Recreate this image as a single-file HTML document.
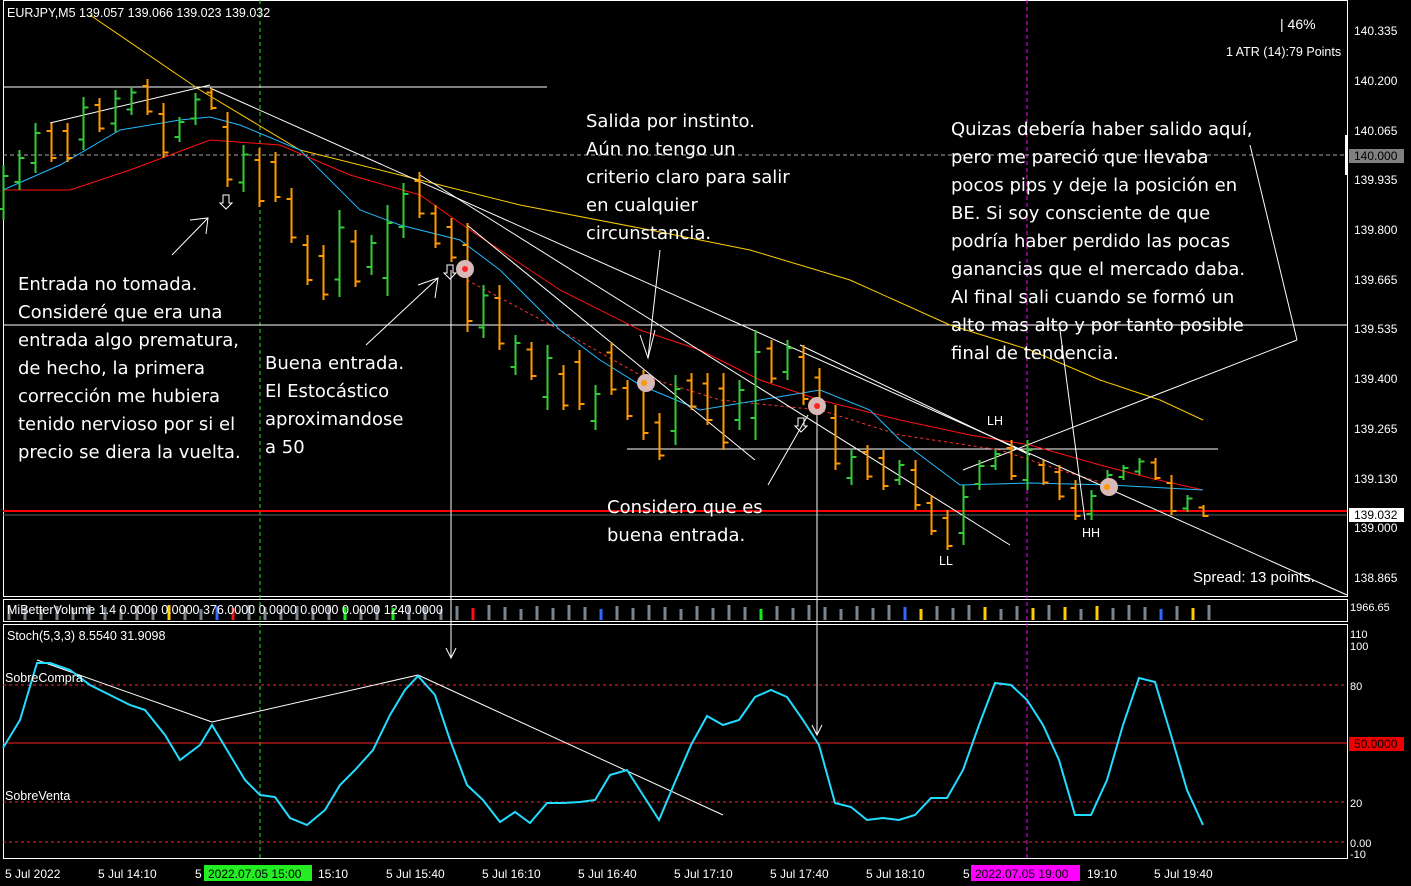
<!DOCTYPE html>
<html><head><meta charset="utf-8">
<style>
html,body{margin:0;padding:0;background:#000;width:1411px;height:886px;overflow:hidden}
svg{display:block}
line{shape-rendering:crispEdges}
.ax{font-family:"Liberation Sans",Arial,sans-serif;font-size:12px;fill:#fff}
.note{font-family:"DejaVu Sans","Liberation Sans",sans-serif;font-size:18px;fill:#fff}
.sm{font-family:"Liberation Sans",Arial,sans-serif;font-size:12.5px;fill:#fff}
</style></head><body>
<svg id="s" width="1411" height="886" xmlns="http://www.w3.org/2000/svg">
<rect width="1411" height="886" fill="#000"/>
<rect x="3.5" y="0.5" width="1344" height="596" fill="none" stroke="#fff"/>
<rect x="3.5" y="599.5" width="1344" height="22" fill="none" stroke="#fff"/>
<rect x="3.5" y="624.5" width="1344" height="234" fill="none" stroke="#fff"/>
<line x1="260" y1="0" x2="260" y2="858" stroke="#3d3" stroke-dasharray="4,3"/>
<line x1="1027" y1="0" x2="1027" y2="858" stroke="#f0f" stroke-dasharray="4,3"/>
<line x1="3" y1="155" x2="1347" y2="155" stroke="#aaa" stroke-dasharray="4,3"/>
<line x1="3" y1="685" x2="1347" y2="685" stroke="#f23" stroke-dasharray="3,3"/>
<line x1="3" y1="802" x2="1347" y2="802" stroke="#f23" stroke-dasharray="3,3"/>
<line x1="3" y1="743" x2="1347" y2="743" stroke="#f22"/>
<line x1="3" y1="842" x2="1347" y2="842" stroke="#f23" stroke-dasharray="3,3"/>
<line x1="3" y1="87" x2="547" y2="87" stroke="#fff"/>
<line x1="3" y1="325" x2="1347" y2="325" stroke="#fff"/>
<line x1="627" y1="449" x2="1218" y2="449" stroke="#fff"/>
<line x1="3" y1="515" x2="1347" y2="515" stroke="#566"/>
<line x1="3" y1="511" x2="1347" y2="511" stroke="#f00" stroke-width="2"/>
<polyline fill="none" stroke="#fc0" points="90,15 200,90 300,150 420,180 520,205 650,230 750,250 850,280 950,325 1030,350 1100,380 1160,400 1203,420"/>
<polyline fill="none" stroke="#f11" points="3,190 70,190 130,170 210,140 280,145 350,175 420,195 470,230 560,290 640,330 700,350 760,380 820,400 900,420 970,435 1030,445 1100,465 1150,478 1203,490"/>
<polyline fill="none" stroke="#f33" stroke-dasharray="3,3" points="467,280 560,330 640,375 720,400 820,410 900,435 1000,450 1060,470 1110,485"/>
<polyline fill="none" stroke="#2bf" points="3,190 60,165 120,130 180,120 210,117 240,125 300,150 360,210 400,225 460,240 500,270 560,330 600,360 640,385 700,410 760,400 820,390 870,410 900,440 940,470 960,485 1030,483 1110,485 1203,490"/>
<g stroke="#fff" fill="none">
<line x1="50" y1="123" x2="210" y2="85" style="shape-rendering:auto"/>
<line x1="210" y1="88" x2="1347" y2="595" style="shape-rendering:auto"/>
<line x1="420" y1="175" x2="1010" y2="545" style="shape-rendering:auto"/>
<line x1="467" y1="225" x2="755" y2="460" style="shape-rendering:auto"/>
<line x1="800" y1="345" x2="1030" y2="455" style="shape-rendering:auto"/>
<line x1="963" y1="470" x2="1297" y2="340" style="shape-rendering:auto"/>
<line x1="1297" y1="340" x2="1250" y2="145" style="shape-rendering:auto"/>
<line x1="1060" y1="330" x2="1085" y2="520" style="shape-rendering:auto"/>
<line x1="451" y1="270" x2="451" y2="658"/>
<polyline points="446,648 451,658 456,648"/>
<line x1="817" y1="410" x2="817" y2="735"/>
<polyline points="812,725 817,735 822,725"/>
<line x1="172" y1="255" x2="208" y2="218" style="shape-rendering:auto"/><polyline points="190,220 208,218 206,234"/>
<line x1="366" y1="345" x2="438" y2="278" style="shape-rendering:auto"/><polyline points="418,285 438,278 435,298"/>
<line x1="648" y1="358" x2="660" y2="250" style="shape-rendering:auto"/><polyline points="640,335 648,358 655,330"/>
<line x1="768" y1="485" x2="808" y2="415" style="shape-rendering:auto"/>
<line x1="37" y1="660" x2="212" y2="722" style="shape-rendering:auto"/>
<line x1="212" y1="722" x2="418" y2="675" style="shape-rendering:auto"/>
<line x1="418" y1="675" x2="723" y2="815" style="shape-rendering:auto"/>
</g>
<g id="bars"></g>
<g id="vol"></g>
<g stroke="#fff" fill="none">
<path d="M223,195 h6 v8 h3 l-6,6 l-6,-6 h3 z"/>
<path d="M447,265 h6 v8 h3 l-6,6 l-6,-6 h3 z"/>
<path d="M798,418 h6 v8 h3 l-6,6 l-6,-6 h3 z"/>
</g>
<g>
<circle cx="465" cy="269" r="9" fill="#d9b8b8"/><circle cx="465" cy="269" r="3" fill="#f22"/>
<circle cx="646" cy="383" r="9" fill="#d9b8b8"/><circle cx="644" cy="383" r="3" fill="#f90"/>
<circle cx="817" cy="406" r="9" fill="#d9b8b8"/><circle cx="817" cy="406" r="3" fill="#f22"/>
<circle cx="1109" cy="487" r="9" fill="#d9b8b8"/><circle cx="1107" cy="487" r="3" fill="#f90"/>
</g>
<polyline fill="none" stroke="#2df" stroke-width="2" points="3,748 20,720 37,663 50,663 70,670 90,685 110,695 130,705 145,710 165,735 180,760 200,745 212,725 230,755 245,780 260,795 275,797 290,818 307,825 325,810 340,785 355,770 373,750 390,715 405,690 418,676 435,695 450,740 467,785 483,800 500,822 515,812 530,823 547,803 563,803 580,802 595,800 610,775 627,770 643,795 659,820 675,782 691,745 707,716 723,725 739,720 755,697 771,690 787,697 803,720 819,745 835,803 851,807 867,820 883,818 899,820 915,815 931,798 947,798 963,770 979,725 995,683 1011,685 1027,700 1043,725 1059,760 1075,815 1091,815 1107,780 1123,725 1139,678 1155,682 1171,735 1187,790 1203,825"/>
<text class="sm" x="7" y="17">EURJPY,M5  139.057 139.066 139.023 139.032</text>
<text class="sm" x="1280" y="29" font-size="14" style="font-size:14px">|  46%</text>
<text class="sm" x="1226" y="56">1 ATR (14):79 Points</text>
<text class="sm" x="7" y="614">MiBetterVolume 1.4 0.0000 0.0000 376.0000 0.0000 0.0000 0.0000 1240.0000</text>
<text class="sm" x="7" y="640">Stoch(5,3,3) 8.5540 31.9098</text>
<text class="sm" x="5" y="682">SobreCompra</text>
<text class="sm" x="5" y="800">SobreVenta</text>
<text class="sm" x="987" y="425">LH</text>
<text class="sm" x="939" y="565">LL</text>
<text class="sm" x="1082" y="537">HH</text>
<text class="sm" x="1193" y="582" style="font-size:15px">Spread: 13 points.</text>
<g class="note">
<text x="18" y="290">Entrada no tomada.</text>
<text x="18" y="318">Consideré que era una</text>
<text x="18" y="346">entrada algo prematura,</text>
<text x="18" y="374">de hecho, la primera</text>
<text x="18" y="402">corrección me hubiera</text>
<text x="18" y="430">tenido nervioso por si el</text>
<text x="18" y="458">precio se diera la vuelta.</text>
<text x="265" y="369">Buena entrada.</text>
<text x="265" y="397">El Estocástico</text>
<text x="265" y="425">aproximandose</text>
<text x="265" y="453">a 50</text>
<text x="586" y="127">Salida por instinto.</text>
<text x="586" y="155">Aún no tengo un</text>
<text x="586" y="183">criterio claro para salir</text>
<text x="586" y="211">en cualquier</text>
<text x="586" y="239">circunstancia.</text>
<text x="607" y="513">Considero que es</text>
<text x="607" y="541">buena entrada.</text>
<text x="951" y="135">Quizas debería haber salido aquí,</text>
<text x="951" y="163">pero me pareció que llevaba</text>
<text x="951" y="191">pocos pips y deje la posición en</text>
<text x="951" y="219">BE. Si soy consciente de que</text>
<text x="951" y="247">podría haber perdido las pocas</text>
<text x="951" y="275">ganancias que el mercado daba.</text>
<text x="951" y="303">Al final sali cuando se formó un</text>
<text x="951" y="331">alto mas alto y por tanto posible</text>
<text x="951" y="359">final de tendencia.</text>
</g>
<g class="ax">
<text x="1354" y="35">140.335</text>
<text x="1354" y="85">140.200</text>
<text x="1354" y="135">140.065</text>
<rect x="1349" y="149" width="55" height="14" fill="#808080"/>
<text x="1354" y="160" style="fill:#000">140.000</text>
<text x="1354" y="184">139.935</text>
<text x="1354" y="234">139.800</text>
<text x="1354" y="284">139.665</text>
<text x="1354" y="333">139.535</text>
<text x="1354" y="383">139.400</text>
<text x="1354" y="433">139.265</text>
<text x="1354" y="483">139.130</text>
<rect x="1349" y="508" width="55" height="14" fill="#fff"/>
<text x="1354" y="519" style="fill:#000">139.032</text>
<text x="1354" y="532">139.000</text>
<text x="1354" y="582">138.865</text>
<text x="1350" y="611" style="font-size:11px">1966.65</text>
<text x="1350" y="638" style="font-size:11px">110</text>
<text x="1350" y="650" style="font-size:11px">100</text>
<text x="1350" y="690" style="font-size:11px">80</text>
<rect x="1349" y="737" width="55" height="14" fill="#e00"/>
<text x="1354" y="748" style="fill:#000">50.0000</text>
<text x="1350" y="807" style="font-size:11px">20</text>
<text x="1350" y="847" style="font-size:11px">0.00</text>
<text x="1350" y="858" style="font-size:11px">-10</text>
</g>
<rect x="1345" y="135" width="3" height="40" fill="#fff"/>
<g class="ax">
<text x="5" y="878">5 Jul 2022</text>
<text x="98" y="878">5 Jul 14:10</text>
<text x="195" y="878">5</text>
<rect x="204" y="865" width="108" height="16" fill="#2e2"/>
<text x="208" y="878" style="fill:#000">2022.07.05 15:00</text>
<text x="318" y="878">15:10</text>
<text x="386" y="878">5 Jul 15:40</text>
<text x="482" y="878">5 Jul 16:10</text>
<text x="578" y="878">5 Jul 16:40</text>
<text x="674" y="878">5 Jul 17:10</text>
<text x="770" y="878">5 Jul 17:40</text>
<text x="866" y="878">5 Jul 18:10</text>
<text x="963" y="878">5</text>
<rect x="971" y="865" width="109" height="16" fill="#f0f"/>
<text x="975" y="878" style="fill:#000">2022.07.05 19:00</text>
<text x="1087" y="878">19:10</text>
<text x="1154" y="878">5 Jul 19:40</text>
</g>
</svg>
<script>
var D=[["g",165,220],["g",150,190],["g",123,173],["o",123,162],["o",123,162],["g",97,150],["o",98,132],["g",90,132],["g",87,115],["o",79,115],["o",103,158],["g",117,142],["g",93,125],["o",88,110],["o",112,187],["g",145,192],["o",148,207],["o",152,202],["o",188,243],["o",235,285],["o",245,300],["g",210,297],["o",230,287],["g",235,275],["g",205,296],["g",183,238],["o",172,218],["o",205,248],["o",218,262],["o",223,332],["g",285,338],["o",285,350],["g",335,375],["o",342,380],["g",345,410],["o",365,410],["o",350,410],["g",385,430],["o",342,395],["o",380,420],["o",370,440],["o",413,460],["g",375,445],["o",373,410],["o",373,425],["o",373,450],["g",380,430],["g",330,440],["o",340,383],["g",340,380],["o",345,405],["o",368,415],["o",405,470],["g",450,485],["o",445,480],["o",450,490],["g",460,485],["o",460,510],["o",495,535],["o",510,550],["g",485,545],["g",460,490],["g",450,470],["o",440,480],["g",440,490],["o",460,485],["o",465,500],["o",480,520],["g",490,520],["g",470,495],["g",465,480],["g",458,475],["o",458,480],["o",475,515],["g",495,512],["o",505,517]];
var s="",v="";
var volc={10:"#fc0",13:"#36f",14:"#f11",21:"#1e1",24:"#1e1",29:"#f11",37:"#36f",47:"#1e1",56:"#36f",57:"#fc0",61:"#fc0",64:"#fc0",66:"#fc0",68:"#fc0",72:"#36f",74:"#fc0"};
D.forEach(function(d,i){var x=3+16*i+0.5,c=d[0]=="g"?"#3c3":"#f90",h=d[1],l=d[2];
var o=d[0]=="g"?l-(l-h)*0.2:h+(l-h)*0.2,cl=d[0]=="g"?h+(l-h)*0.2:l-(l-h)*0.1;
s+='<line x1="'+x+'" y1="'+h+'" x2="'+x+'" y2="'+l+'" stroke="'+c+'" stroke-width="2"/>';
s+='<line x1="'+(x-5)+'" y1="'+o+'" x2="'+x+'" y2="'+o+'" stroke="'+c+'" stroke-width="2"/>';
s+='<line x1="'+x+'" y1="'+cl+'" x2="'+(x+5)+'" y2="'+cl+'" stroke="'+c+'" stroke-width="2"/>';
var vc=volc[i]||"#7a8490";var vh=(i*7)%5;
v+='<rect x="'+(x+4)+'" y="'+(605+vh)+'" width="3" height="'+(15-vh)+'" fill="'+vc+'"/>';});
document.getElementById("bars").innerHTML=s;
document.getElementById("vol").innerHTML=v;
</script>
</body></html>
